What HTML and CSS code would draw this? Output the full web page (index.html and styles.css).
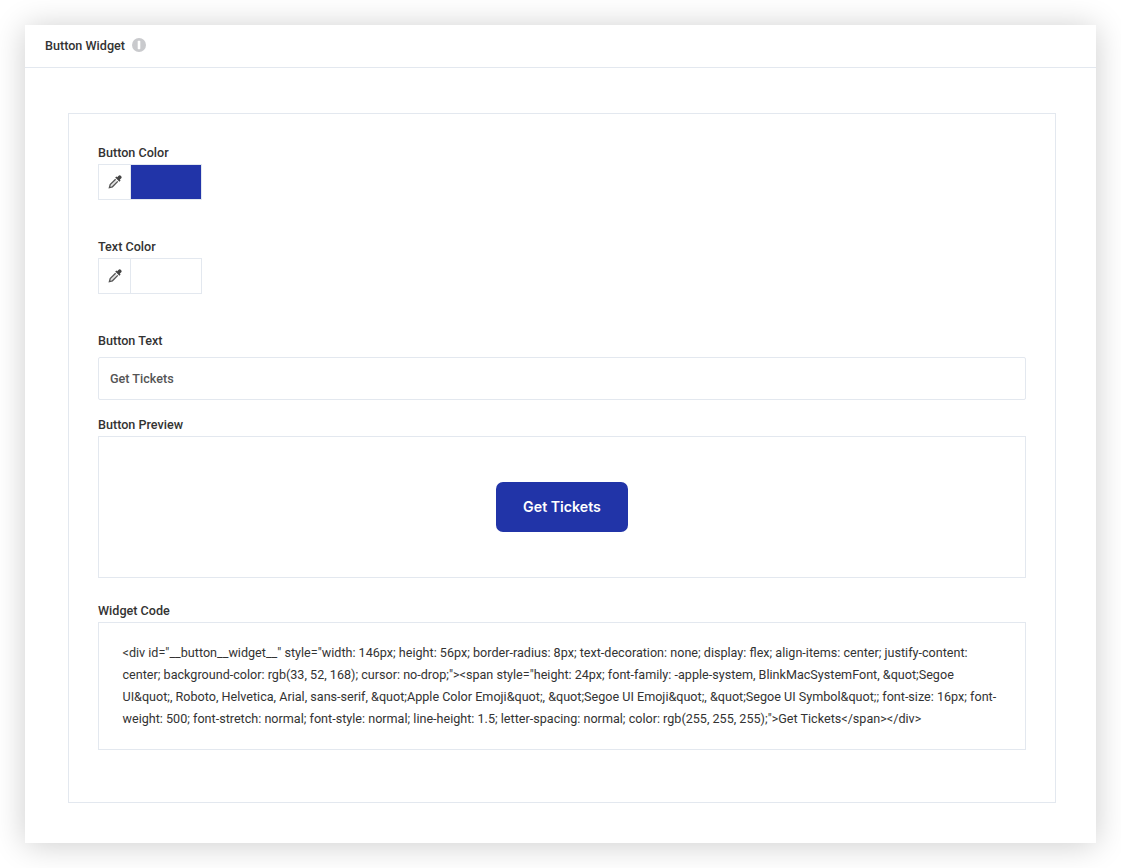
FILE: index.html
```html
<!DOCTYPE html>
<html lang="en">
<head>
    <meta charset="UTF-8">
    <title>Button Widget</title>
    <link rel="stylesheet" href="styles.css">
</head>
<body>
    <div class="card">
        <div class="card-header">
            <h1>Button Widget</h1>
            <span class="info-icon">
                <svg width="14" height="14" viewBox="0 0 14 14"><circle cx="7" cy="7" r="7" fill="#c9cacd"/><rect x="5.7" y="2.8" width="2.6" height="8.4" rx="0.7" fill="#fff"/></svg>
            </span>
        </div>
        <div class="card-body">
            <div class="panel">
                <div class="field color-field">
                    <label>Button Color</label>
                    <div class="color-picker">
                        <span class="dropper">
                            <svg width="14" height="14" viewBox="0 0 14 14"><path d="M9.2 2.2 10.4 1a1.6 1.6 0 0 1 2.6 2.6L11.8 4.8 12.6 5.6 11.4 6.8 7.2 2.6 8.4 1.4Z" fill="#444"/><path d="M7.6 4.2 2.2 9.6 1.4 12.6 4.4 11.8 9.8 6.4" fill="#e4e4e4" stroke="#555" stroke-width="1.3"/></svg>
                        </span>
                        <span class="swatch swatch-blue"></span>
                    </div>
                </div>
                <div class="field color-field">
                    <label>Text Color</label>
                    <div class="color-picker">
                        <span class="dropper">
                            <svg width="14" height="14" viewBox="0 0 14 14"><path d="M9.2 2.2 10.4 1a1.6 1.6 0 0 1 2.6 2.6L11.8 4.8 12.6 5.6 11.4 6.8 7.2 2.6 8.4 1.4Z" fill="#444"/><path d="M7.6 4.2 2.2 9.6 1.4 12.6 4.4 11.8 9.8 6.4" fill="#e4e4e4" stroke="#555" stroke-width="1.3"/></svg>
                        </span>
                        <span class="swatch"></span>
                    </div>
                </div>
                <div class="field text-field">
                    <label>Button Text</label>
                    <div class="text-input">Get Tickets</div>
                </div>
                <div class="field preview-field">
                    <label>Button Preview</label>
                    <div class="preview">
                        <a class="preview-btn">Get Tickets</a>
                    </div>
                </div>
                <div class="field">
                    <label>Widget Code</label>
                    <div class="code">&lt;div id="__button__widget__" style="width: 146px; height: 56px; border-radius: 8px; text-decoration: none; display: flex; align-items: center; justify-content: center; background-color: rgb(33, 52, 168); cursor: no-drop;"&gt;&lt;span style="height: 24px; font-family: -apple-system, BlinkMacSystemFont, &amp;quot;Segoe UI&amp;quot;, Roboto, Helvetica, Arial, sans-serif, &amp;quot;Apple Color Emoji&amp;quot;, &amp;quot;Segoe UI Emoji&amp;quot;, &amp;quot;Segoe UI Symbol&amp;quot;; font-size: 16px; font-weight: 500; font-stretch: normal; font-style: normal; line-height: 1.5; letter-spacing: normal; color: rgb(255, 255, 255);"&gt;Get Tickets&lt;/span&gt;&lt;/div&gt;</div>
                </div>
            </div>
        </div>
    </div>
</body>
</html>
```

FILE: styles.css
```css
*{
    box-sizing: border-box;
    padding: 0;
    margin: 0;
}
body{
    width: 1121px;
    height: 868px;
    padding: 25px;
    background: #fff;
    font-family: Roboto, "Liberation Sans", sans-serif;
    color: #333;
    overflow: hidden;
}
.card{
    width: 1071px;
    height: 818px;
    background: #fff;
    box-shadow: 0 2px 30px rgba(0, 0, 0, 0.2);
}
.card-header{
    height: 43px;
    display: flex;
    align-items: center;
    gap: 7px;
    padding: 0 0 2px 20px;
    border-bottom: 1px solid #e3e8ef;
}
h1{
    font-size: 12.6px;
    font-weight: 500;
    color: #333;
}
.info-icon{
    display: flex;
}
.card-body{
    padding: 45px 40px 40px 43px;
}
.panel{
    height: 690px;
    padding: 30px 29px 0;
    border: 1px solid #e3e8ef;
}
label{
    display: block;
    margin-bottom: 2px;
    font-size: 12.6px;
    font-weight: 500;
    line-height: 18px;
    color: #333;
}
.color-field{
    height: 94px;
}
.color-picker{
    display: flex;
    width: 104px;
    height: 36px;
    border: 1px solid #e3e8ef;
}
.dropper{
    width: 32px;
    display: flex;
    align-items: center;
    justify-content: center;
    border-right: 1px solid #e3e8ef;
}
.swatch{
    flex: 1;
}
.swatch-blue{
    background: #2134a8;
}
.text-field{
    height: 84px;
}
.text-input{
    height: 43px;
    margin-top: 7px;
    padding-left: 11px;
    display: flex;
    align-items: center;
    border: 1px solid #e3e8ef;
    border-radius: 2px;
    font-size: 12.6px;
    font-weight: 500;
    color: #555;
}
.preview-field{
    height: 186px;
}
.preview{
    height: 142px;
    display: flex;
    align-items: center;
    justify-content: center;
    border: 1px solid #e3e8ef;
}
.preview-btn{
    width: 132px;
    height: 50px;
    padding-bottom: 1px;
    display: flex;
    align-items: center;
    justify-content: center;
    background: #2134a8;
    border-radius: 7px;
    color: #fff;
    font-family: Inter, sans-serif;
    font-size: 14.2px;
    font-weight: 600;
}
.code{
    height: 128px;
    padding: 19px 24px 19px 23.5px;
    border: 1px solid #e3e8ef;
    font-size: 12.6px;
    line-height: 22px;
    color: #333;
}
```
